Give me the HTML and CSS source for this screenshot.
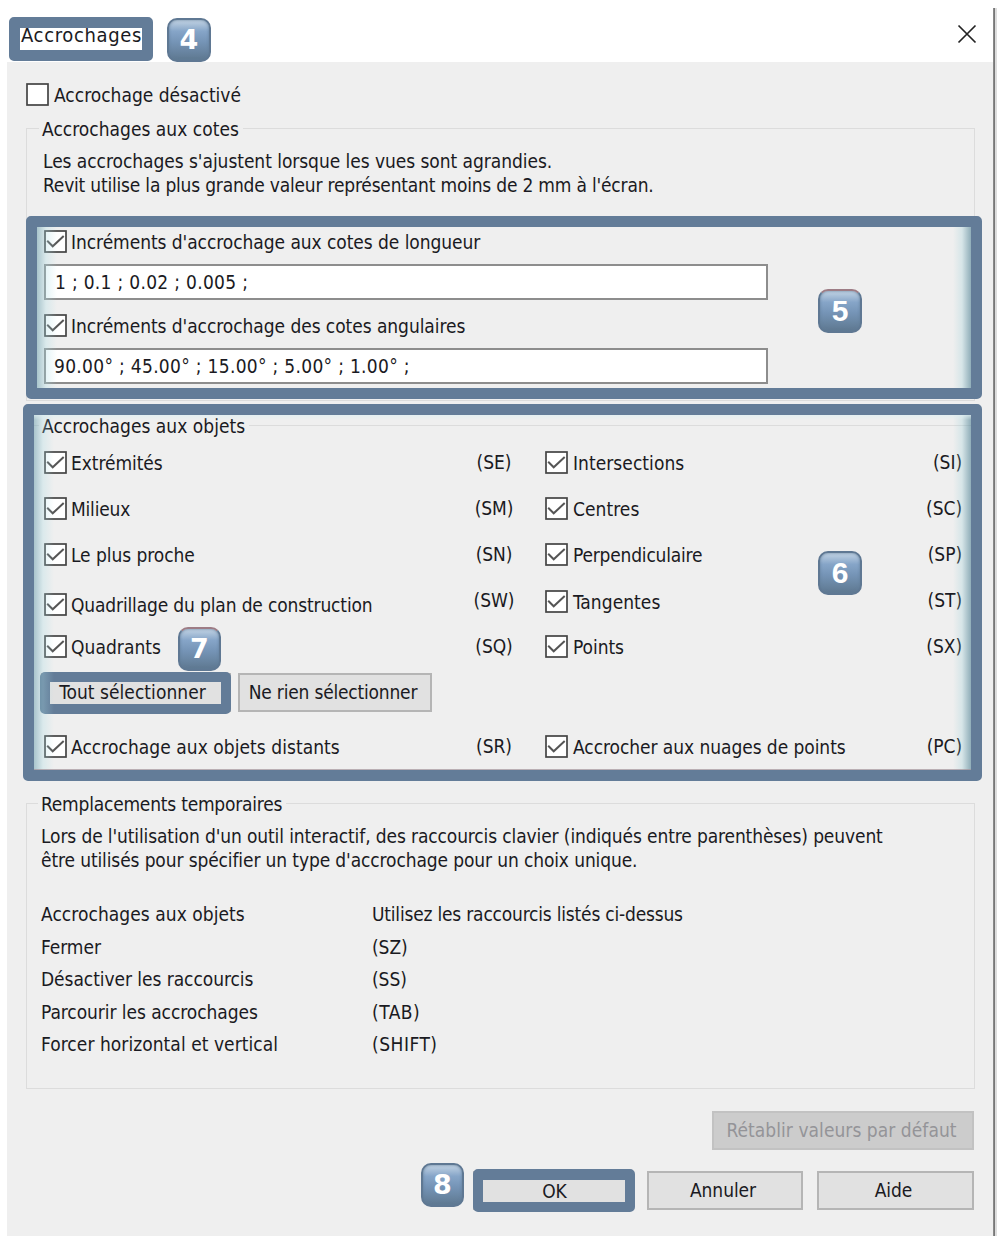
FILE: index.html
```
<!DOCTYPE html>
<html lang="fr">
<head>
<meta charset="utf-8">
<title>Accrochages</title>
<link rel="stylesheet" href="styles.css">
</head>
<body>
<svg class="defs" width="0" height="0">
  <symbol id="box" viewBox="0 0 23 23"><rect x="1" y="1" width="21" height="21" fill="#fff" stroke="#444" stroke-width="1.7"/></symbol>
  <symbol id="checked" viewBox="0 0 23 23"><rect x="1" y="1" width="21" height="21" fill="#fff" stroke="#444" stroke-width="1.7"/><path d="M3.2 10.8 8.7 16.3 19.7 6" fill="none" stroke="#555" stroke-width="2"/></symbol>
</svg>
<main class="dialog">
  <header class="titlebar">
    <h1 class="title">Accrochages</h1>
    <svg class="close" viewBox="0 0 20 20"><path d="M1.5 1.5 18.5 18.5M18.5 1.5 1.5 18.5" stroke="#222" stroke-width="1.7" fill="none"/></svg>
  </header>
  <div class="content">
    <label class="check off"><svg><use href="#box"/></svg><span>Accrochage désactivé</span></label>

    <section class="group cotes">
      <h2>Accrochages aux cotes</h2>
      <p class="intro">Les accrochages s'ajustent lorsque les vues sont agrandies.</p>
      <p class="tight">Revit utilise la plus grande valeur représentant moins de 2 mm à l'écran.</p>
      <label class="check"><svg><use href="#checked"/></svg><span>Incréments d'accrochage aux cotes de longueur</span></label>
      <div class="input first">1 ; 0.1 ; 0.02 ; 0.005 ;</div>
      <label class="check"><svg><use href="#checked"/></svg><span>Incréments d'accrochage des cotes angulaires</span></label>
      <div class="input">90.00° ; 45.00° ; 15.00° ; 5.00° ; 1.00° ;</div>
    </section>

    <section class="group objets">
      <h2>Accrochages aux objets</h2>
      <div class="grid">
        <label class="check"><svg><use href="#checked"/></svg><span>Extrémités</span></label><span class="code">(SE)</span>
        <label class="check right"><svg><use href="#checked"/></svg><span class="loose">Intersections</span></label><span class="code end">(SI)</span>
        <label class="check"><svg><use href="#checked"/></svg><span class="tight">Milieux</span></label><span class="code">(SM)</span>
        <label class="check right"><svg><use href="#checked"/></svg><span class="loose">Centres</span></label><span class="code end">(SC)</span>
        <label class="check"><svg><use href="#checked"/></svg><span>Le plus proche</span></label><span class="code">(SN)</span>
        <label class="check right"><svg><use href="#checked"/></svg><span class="tight">Perpendiculaire</span></label><span class="code end">(SP)</span>
        <label class="check low"><svg><use href="#checked"/></svg><span class="quad">Quadrillage du plan de construction</span></label><span class="code">(SW)</span>
        <label class="check right tang"><svg><use href="#checked"/></svg><span class="loose">Tangentes</span></label><span class="code end">(ST)</span>
        <label class="check"><svg><use href="#checked"/></svg><span class="loose">Quadrants</span></label><span class="code">(SQ)</span>
        <label class="check right"><svg><use href="#checked"/></svg><span>Points</span></label><span class="code end">(SX)</span>
      </div>
      <div class="select-row"><button class="btn all">Tout sélectionner</button><button class="btn none">Ne rien sélectionner</button></div>
      <div class="grid last">
        <label class="check"><svg><use href="#checked"/></svg><span class="loose">Accrochage aux objets distants</span></label><span class="code">(SR)</span>
        <label class="check right"><svg><use href="#checked"/></svg><span>Accrocher aux nuages de points</span></label><span class="code end">(PC)</span>
      </div>
    </section>

    <section class="group temp">
      <h2>Remplacements temporaires</h2>
      <p class="intro">Lors de l'utilisation d'un outil interactif, des raccourcis clavier (indiqués entre parenthèses) peuvent</p>
      <p>être utilisés pour spécifier un type d'accrochage pour un choix unique.</p>
      <dl>
        <dt class="loose">Accrochages aux objets</dt><dd class="tight">Utilisez les raccourcis listés ci-dessus</dd>
        <dt>Fermer</dt><dd>(SZ)</dd>
        <dt>Désactiver les raccourcis</dt><dd>(SS)</dd>
        <dt>Parcourir les accrochages</dt><dd class="wider">(TAB)</dd>
        <dt class="loose">Forcer horizontal et vertical</dt><dd class="wider">(SHIFT)</dd>
      </dl>
    </section>

    <footer class="footer">
      <button class="btn reset" disabled>Rétablir valeurs par défaut</button>
      <div class="actions"><button class="btn ok">OK</button><button class="btn cancel">Annuler</button><button class="btn help">Aide</button></div>
    </footer>
  </div>
  <div class="frame f-title"></div>
  <div class="frame f-all"></div>
  <div class="frame f-cotes"></div>
  <div class="frame f-objets"></div>
  <div class="frame f-ok"></div>
  <div class="badge b4 wide">4</div>
  <div class="badge b5 red">5</div>
  <div class="badge b6">6</div>
  <div class="badge b7 wide red">7</div>
  <div class="badge b8 wide">8</div>
</main>
</body>
</html>
```
FILE: styles.css
```
* { box-sizing: border-box; }
body { margin: 0; background: #fff; }
.defs { position: absolute; }
h1, h2, p, dl, dd { margin: 0; font: inherit; }
.dialog {
  position: relative;
  width: 1008px;
  height: 1242px;
  padding-left: 7px;
  font: 19px/24px "DejaVu Sans Condensed", "DejaVu Sans", sans-serif;
  font-stretch: condensed;
  letter-spacing: -0.06px;
  color: #1a1a22;
  white-space: nowrap;
}
.tight { letter-spacing: -0.2px; }
.quad { letter-spacing: -0.15px; }
.loose { letter-spacing: 0.05px; }
.wider { letter-spacing: 0.5px; }
/* window edge on the right */
.dialog::after {
  content: "";
  position: absolute;
  left: 993px;
  top: 8px;
  width: 4px;
  height: 1228px;
  background: linear-gradient(90deg, #8a8a8a 0 1px, #777 1px 2px, #ddd 2px);
}
.titlebar {
  display: flex;
  justify-content: space-between;
  width: 986px;
  height: 62px;
  padding: 24px 16px 0 14px;
}
.title { font-size: 20px; line-height: 23px; letter-spacing: 0.65px; }
.close { width: 20px; height: 20px; }
.content {
  width: 986px;
  height: 1174px;
  padding: 21px 18px 0 19px;
  background: #efefef;
}
.check { display: flex; height: 23px; align-items: center; gap: 4px; }
.check svg { width: 23px; height: 23px; flex: none; }
.off { gap: 5px; letter-spacing: 0; }
.group { border: 1px solid #dcdcdc; padding: 0 0 0 17px; }
.group h2 {
  width: max-content;
  height: 24px;
  margin: -12px 0 0 -5px;
  padding: 0 4px 0 3px;
  background: #efefef;
}
.cotes { margin-top: 22px; height: 273px; }
.cotes h2 { letter-spacing: 0.02px; }
.cotes p { margin-left: -1px; }
.cotes .intro { margin-top: 8px; letter-spacing: -0.05px; }
.cotes .check { margin-top: 33px; }
.input {
  width: 724px;
  height: 36px;
  margin-top: 11px;
  padding: 4px 9px;
  border: 2px solid #8d8d8d;
  background: #fff;
  letter-spacing: 0.3px;
}
.first + .check + .input { padding-left: 8px; }
.cotes .first + .check { margin-top: 14px; }
.objets { margin-top: 24px; height: 347px; }
.objets h2 { letter-spacing: 0.02px; }
.grid {
  display: grid;
  grid-template-columns: 401px 100px 1fr 60px;
  grid-auto-rows: 46px;
  margin-top: 13px;
}
.right { gap: 5px; }
.tang { margin-top: 1px; }
.code { width: 98px; text-align: center; line-height: 22px; }
.code.end { width: 60px; padding-right: 12px; text-align: right; }
.low { margin-top: 4px; }
.select-row { display: flex; gap: 7px; margin: -8px 0 0 -3px; }
.btn {
  width: 156px;
  height: 39px;
  padding: 0 4px 1px 0;
  border: 2px solid #b5b5b5;
  border-radius: 0;
  background: #e1e1e1;
  font: inherit;
  letter-spacing: inherit;
  color: inherit;
}
.all { width: 190px; padding-right: 7px; letter-spacing: 0.05px; }
.none { width: 194px; letter-spacing: -0.2px; }
.grid.last { margin-top: 23px; }
.temp { margin-top: 31px; height: 286px; padding-left: 14px; }
.temp h2 { margin-left: -3px; letter-spacing: -0.22px; }
.temp p { letter-spacing: -0.12px; }
.temp .intro { margin-top: 8px; }
dl {
  display: grid;
  grid-template-columns: 331px 1fr;
  grid-auto-rows: 32.5px;
  margin-top: 30px;
}
.footer {
  display: flex;
  flex-direction: column;
  align-items: flex-end;
  gap: 21px;
  margin: 22px 1px 0 0;
}
.reset {
  width: 262px;
  padding-right: 3px;
  color: #949498;
  background: #ccc;
  border-color: #c2c2c2;
  letter-spacing: 0.05px;
}
.actions { display: flex; gap: 14px; }
.ok { width: 160px; padding: 0 0 0 3px; }
.help { width: 157px; }

/* callouts drawn over the dialog */
.frame { position: absolute; border: 11px solid #637c98; border-radius: 5px; }
.f-title { left: 9px; top: 17px; width: 144px; height: 44px; }
.f-cotes { left: 26px; top: 216px; width: 956px; height: 183px; }
.f-objets { left: 23px; top: 404px; width: 959px; height: 377px; }
.f-cotes, .f-objets {
  background:
    linear-gradient(90deg, rgba(100,155,170,.5), rgba(170,220,228,.3) 9px, rgba(215,240,243,0) 20px) padding-box,
    linear-gradient(270deg, rgba(80,130,148,.6), rgba(140,200,210,.25) 9px, rgba(200,235,238,0) 18px) padding-box;
}
.f-objets::after {
  content: "";
  position: absolute;
  inset: 0;
  border-bottom: 1px solid #a5949c;
  background: linear-gradient(#dfeff2, transparent 5px);
  opacity: .7;
}
.f-all { left: 40px; top: 672px; width: 191px; height: 42px; border-width: 10px; }
.f-ok {
  left: 473px;
  top: 1169px;
  width: 162px;
  height: 43px;
  border-width: 11px 10px 10px;
}
.badge {
  position: absolute;
  width: 44px;
  height: 44px;
  border: 2px solid #5f7893;
  border-radius: 10px;
  background: linear-gradient(#c3d4e4, #86a5c8 28%, #7594b6 55%, #5e7890);
  box-shadow: inset 0 0 3px #607c98;
  color: #fff;
  font: bold 30px/40px "Liberation Sans", Arial, sans-serif;
  letter-spacing: 0;
  text-align: center;
}
.badge.wide { font: bold 27px/40px "DejaVu Sans", sans-serif; }
.red { border-top-color: #9d7c85; }
.b4 { left: 167px; top: 18px; }
.b5 { left: 818px; top: 289px; }
.b6 { left: 818px; top: 551px; }
.b7 { left: 178px; top: 627px; width: 43px; }
.b8 { left: 421px; top: 1163px; width: 43px; }
```
